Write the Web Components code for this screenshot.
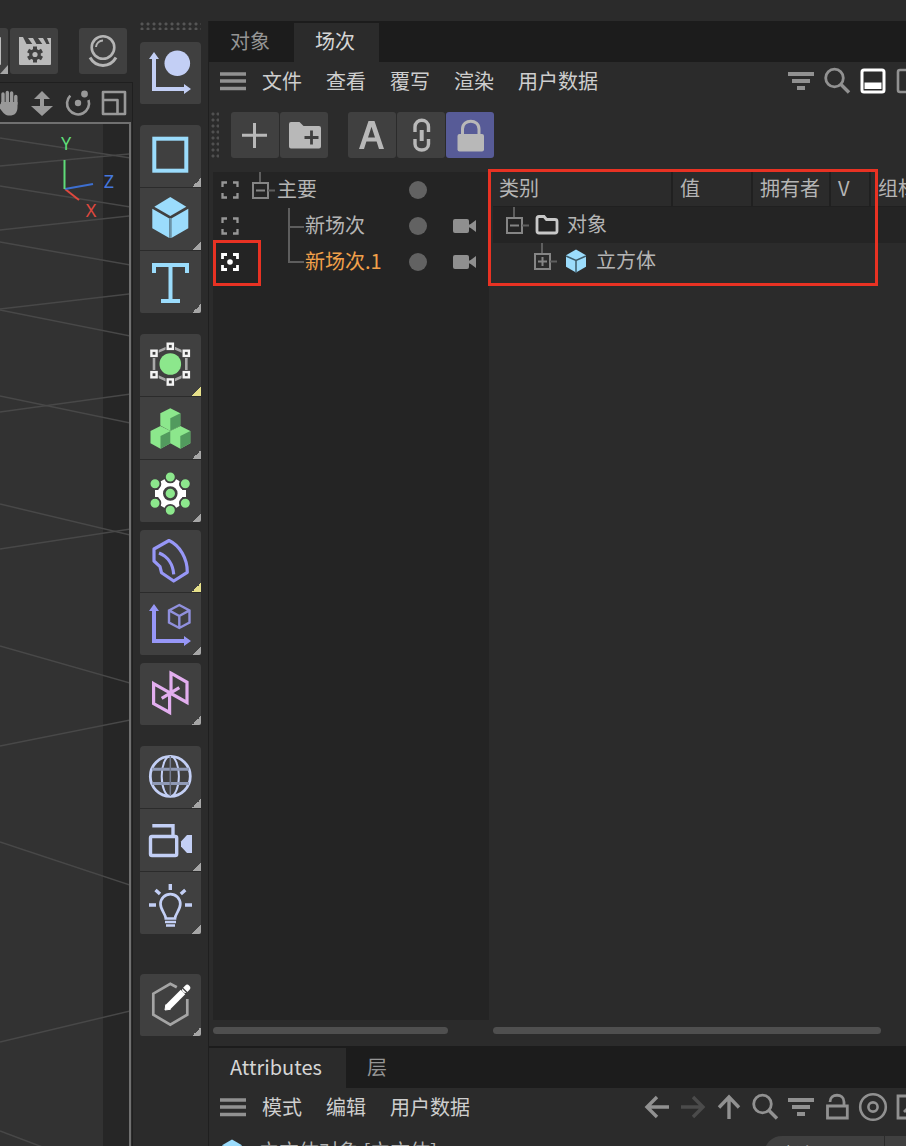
<!DOCTYPE html>
<html lang="zh-CN">
<head>
<meta charset="utf-8">
<title>场次</title>
<style>
  html, body { margin: 0; height: 100%; background: #2b2b2b; }
  body { overflow: hidden; color: #cecece; font: 20px/28px "Noto Sans CJK SC", "Noto Sans", sans-serif; }
</style>
</head>
<body>
<studio-app></studio-app>
<script>
const axes = (c, x, top, base, right) => `<g fill="${c}"><path d="M${x - 2} ${top + 5}h4V${base - 2}H${right - 6}v4H${x - 2}z"/><path d="M${x - 5} ${top + 7}l5-7 5 7zM${right - 7} ${base - 5}l7 5-7 5z"/></g>`;
const cube = (dx, dy) => `<g transform="translate(${dx} ${dy})"><path fill="#8ce78c" d="M10 0l10 5v12.300l-10 5.400-10-5.400V5z"/><path fill="#529a5e" d="M10 10l10-5v12.300l-10 5.400z"/></g>`;
const hex = [[30.3,12.3],[46.3,19.3],[46.3,40.7],[30.3,48],[14,40.7],[14,19.3]];
const dots = [[30.3,17],[45.3,23.7],[45.3,43.3],[30.3,50.3],[15,43.3],[15,23.7]];
const blueCube = `<g fill="#9bdcfc"><path d="M30.300 9l16 9.700-16 9.300-16-9.300z"/><path d="M12.300 20.800l17 9.700V50l-17-9.700zM48.300 20.800l-17 9.700V50l17-9.700z"/></g><path d="M30.300 30v20" stroke="#6a93a8" stroke-width="2"/>`;

// name: [width, height, markup]
const ICONS = {
  axisObject: [61,62, axes('#c3cff5',14,10,47,51) + '<circle cx="37.300" cy="21.300" r="12.800" fill="#c3cff5"/>'],
  rect: [61,62, '<rect x="14.300" y="13.700" width="32" height="32" fill="none" stroke="#9bdcfc" stroke-width="4"/>'],
  cube: [61,62, blueCube],
  text: [61,62, '<path fill="#9bdcfc" d="M12 12h37v10h-4v-6H32.500v32H40v4H21v-4h7.500V16H16v6h-4z"/>'],
  subdiv: [61,62, `<path d="M30.300 12.300L46.300 19.300V40.700L30.300 48 14 40.700V19.300z" fill="none" stroke="#a9a9a9" stroke-width="2.600"/><circle cx="30.300" cy="30" r="10.800" fill="#8ce78c"/>` + hex.map(([x,y]) => `<rect x="${x-4.7}" y="${y-4.7}" width="9.400" height="9.400" fill="#404040"/><rect x="${x-2.6}" y="${y-2.6}" width="5.200" height="5.200" fill="#404040" stroke="#f4f4f4" stroke-width="2.400"/>`).join('')],
  cloner: [61,62, cube(20.3,11.3) + cube(10.5,29) + cube(30.3,29)],
  mograph: [61,62, '<circle cx="30.300" cy="33.500" r="12.500" fill="#fff"/><path d="M15 33.500h31M22.600 20.200l15.400 26.600M38 20.200L22.600 46.800" stroke="#fff" stroke-width="7"/>' + dots.map(([x,y]) => `<circle cx="${x}" cy="${y}" r="5.400" fill="#8ce78c" stroke="#404040" stroke-width="1.800"/>`).join('') + '<circle cx="30.300" cy="33.500" r="6" fill="#8ce78c" stroke="#404040" stroke-width="2.600"/>'],
  bend: [61,62, '<path d="M29 10.500L14 19v12l6 5.700 1.500 6L33.700 51l13.600-8.700C47.500 29 40 15.500 29 10.500zM19 23c9 3.500 14 12 14.700 21.300" fill="none" stroke="#9797f7" stroke-width="3.200" stroke-linejoin="round"/>'],
  axisCube: [61,62, axes('#9797f7',14,11,48,51) + '<path d="M39.300 12l10.200 5.400v12.200L39.300 35 29 29.600V17.400zM29 17.400l10.300 5.600 10.200-5.600M39.300 23v12" fill="none" stroke="#9090dd" stroke-width="2.400"/>'],
  field: [61,62, '<path d="M13.600 20.600L29.600 29.700V49.500L13.600 40.600zM31 10.200L47 19.300v20.200l-16-9zM21.700 35.300l17.600-10.600" fill="none" stroke="#e2aeee" stroke-width="3.200"/>'],
  globe: [61,62, '<g fill="none" stroke="#c3cff5"><circle cx="30.300" cy="30.300" r="20" stroke-width="2.800"/><ellipse cx="30.300" cy="30.300" rx="8.600" ry="20" stroke-width="2"/><path d="M12 23.200h37M12 37.500h37" stroke="#8f99b5" stroke-width="3"/><path d="M30.300 10v40" stroke="#747b91" stroke-width="1.500"/></g>'],
  camera: [61,62, '<g fill="none" stroke="#c3cff5" stroke-width="3.400"><path d="M12.300 16.700H33V28"/><rect x="10.500" y="27.500" width="26.200" height="19" rx="1.500"/></g><path fill="#c3cff5" d="M52 26v18h-5l-6-6.500v-5L47 26z"/>'],
  bulb: [61,62, '<g fill="none" stroke="#c3cff5" stroke-width="2.700"><path d="M25.800 46.500C25.800 42 20.500 38 20.500 32a9.900 9.900 0 0 1 19.800 0c0 6-5.300 10-5.300 14.500zM25 50h11M26 53.500h9"/><path d="M30.300 12v6M15.500 18l4.500 4M45.300 18l-4.500 4M9 33h7M45 33h7" stroke-width="3.400"/></g>'],
  edit: [61,62, '<path d="M36.800 13.300L30.300 9.800 13.300 19.700v21l17 9.900 17-9.900V25" fill="none" stroke="#a5a5a5" stroke-width="2.700"/><path d="M27.800 33.200L43 18" stroke="#fff" stroke-width="6.400"/><path d="M25 36l.8-5.200 4.500 4.500z" fill="#fff" stroke="#fff"/><path d="M45.200 15.800l2-2" stroke="#fff" stroke-width="6" stroke-linecap="round"/><path d="M42 13.500l5.500 5.500" stroke="#404040" stroke-width="1.200"/>'],
  clip: [48,46, '<path fill="#bababa" d="M9 16h32v20a1 1 0 0 1-1 1H10a1 1 0 0 1-1-1z"/><path fill="#bababa" d="M9 9h4l4 8H9zM18 10h5l4 7h-4zM28 10h5l4 7h-4zM37 10h4v7h-1z"/><g fill="#404040"><circle cx="25" cy="26.500" r="5.800"/><path d="M23 18.500h4v16h-4zM17.100 24.200l2-3.500 13.900 8-2 3.500zM31 20.700l2 3.500-13.900 8-2-3.500z"/></g><circle cx="25" cy="26.500" r="2.600" fill="#bababa"/>'],
  partClip: [48,46, '<rect x="9" y="9" width="32" height="28" rx="1" fill="#bababa"/><path fill="#a6a6a6" d="M48 37v9h-8z"/>'],
  sphere: [48,46, '<g fill="none" stroke="#b5b5b5"><circle cx="24" cy="19.500" r="11.300" stroke-width="2.600"/><path d="M17 19a7 7 0 0 1 7-6.500" stroke-width="2"/><path d="M11 29.500c6 10.500 20 10.500 26 0" stroke-width="3"/></g>'],
  hand: [24,26, '<g fill="none" stroke="#999" stroke-width="3.400" stroke-linecap="round"><path d="M8 13V4M12.300 12V2.500M16.600 12V3M20.800 14V6.500M2.500 13l5 6"/></g><path fill="#999" d="M6 12h16.500v5c0 6-3 8.500-8 8.500-4 0-6-2-8.500-6z"/>'],
  updown: [26,26, '<path fill="#999" d="M13 1l8 8h-6v7h9l-11 10L2 16h9V9H5z"/>'],
  orbit: [26,26, '<path d="M5.300 5.600A11 11 0 1 0 23.500 10" fill="none" stroke="#999" stroke-width="2.600"/><circle cx="13" cy="13" r="3.200" fill="#999"/><circle cx="19.500" cy="4" r="3.400" fill="#999"/>'],
  layout: [26,26, '<path d="M2 2h22v22H2zM2 10h14.500v14" fill="none" stroke="#999" stroke-width="2.600" stroke-linejoin="round"/>'],
  menu: [26,26, '<path d="M0 6h26M0 13h26M0 20.500h26" stroke="#919191" stroke-width="3.600"/>'],
  filter: [26,26, '<path d="M0 6h26M4 13h18M9 20h8" stroke="#919191" stroke-width="3.800"/>'],
  search: [26,26, '<circle cx="10.500" cy="10" r="8.800" fill="none" stroke="#919191" stroke-width="2.800"/><path d="M17 16.500l8 8" stroke="#919191" stroke-width="3.400"/>'],
  split: [26,26, '<rect x="2" y="2" width="22" height="22" rx="2" fill="none" stroke="#fff" stroke-width="3"/><path d="M4.500 14.500h17V21h-17z" fill="#fff"/>'],
  pane: [26,26, '<rect x="2" y="2" width="22" height="22" rx="2" fill="none" stroke="#919191" stroke-width="2.600"/>'],
  external: [26,26, '<path d="M24 14v10H2V2h11M8 18L22 4" fill="none" stroke="#919191" stroke-width="2.800"/>'],
  left: [26,26, '<path d="M25 13H3M13 3L3 13l10 10" fill="none" stroke="#919191" stroke-width="3.400"/>'],
  right: [26,26, '<path d="M1 13h22M13 3l10 10-10 10" fill="none" stroke="#4b4b4b" stroke-width="3.400"/>'],
  up: [26,26, '<path d="M13 25V3M3 13.500L13 3l10 10.500" fill="none" stroke="#919191" stroke-width="3.400"/>'],
  unlock: [26,26, '<path d="M3.500 12h19.800v12H3.500zM6 8c0-9 14-9 14 0v4" fill="none" stroke="#919191" stroke-width="2.800"/>'],
  target: [26,26, '<g fill="none" stroke="#919191" stroke-width="2.600"><circle cx="13" cy="13" r="12.800"/><circle cx="13" cy="13" r="4.600"/></g>'],
  plus: [48,46, '<path d="M11 23.300h25M23.500 11v25" stroke="#b8b8b8" stroke-width="3"/>'],
  addFolder: [48,46, '<path fill="#b8b8b8" d="M9 12a2 2 0 0 1 2-2h8.500l4 4H39a2 2 0 0 1 2 2v18.500a2 2 0 0 1-2 2H11a2 2 0 0 1-2-2z"/><path d="M24.500 25.500h14M31.500 18.500v14" stroke="#404040" stroke-width="2.800"/>'],
  auto: [48,46, '<path fill="#b8b8b8" fill-rule="evenodd" d="M20.500 9h6L36 37h-5l-2.400-7.500H18.400L16 37h-5zM20 25.500h7l-3.500-10.700z"/>'],
  link: [48,46, '<path d="M18 20v-5c0-9 13.500-9 13.500 0v5M18 27v5c0 8 13.500 8 13.500 0v-5" fill="none" stroke="#b8b8b8" stroke-width="3.400"/><path d="M24.700 18v11" stroke="#b8b8b8" stroke-width="4"/>'],
  lock: [48,46, '<path fill="#b8b8b8" d="M11.500 24a2 2 0 0 1 2-2H36a2 2 0 0 1 2 2v13.500a2 2 0 0 1-2 2H13.500a2 2 0 0 1-2-2z"/><path d="M16.500 23v-6c0-10.500 16.500-10.500 16.500 0v6" fill="none" stroke="#b8b8b8" stroke-width="3"/>'],
  focus: [18,18, '<path d="M1.500 6V1.500H6M12 1.500h4.500V6M16.500 12v4.500H12M6 16.500H1.500V12" fill="none" stroke="#969696" stroke-width="2.300"/>'],
  focusOn: [18,18, '<path d="M1.500 6V1.500H6M12 1.500h4.500V6M16.500 12v4.500H12M6 16.500H1.500V12" fill="none" stroke="#fff" stroke-width="2.800"/><circle cx="9" cy="9" r="2.800" fill="#fff"/>'],
  movie: [24,14, '<rect x="0" y="0" width="16" height="14" rx="2" fill="#8f8f8f"/><path d="M17 5.500L23 1v12l-6-4.500z" fill="#8f8f8f"/><path d="M15 5.500h3v3h-3z" fill="#8f8f8f"/>'],
  folder: [24,20, '<path d="M2 5V3.500C2 2 2.500 1.500 4 1.500h5l2.500 3H20c1.500 0 2 .5 2 2V16c0 1.500-.5 2-2 2H4c-1.500 0-2-.5-2-2z" fill="none" stroke="#c8c8c8" stroke-width="2.800"/>'],
  smallCube: [22,24, '<path d="M11 .5l10 5.800v11.400L11 23.500l-10-5.800V6.300z" fill="#9bdcfc"/><path d="M1 7l10 4.500L21 7M11 11.500v12" fill="none" stroke="#3c5b69" stroke-width="1.500"/>'],
  // tree guides, one cell of a 36px row each
  rootNode: [29,36, '<g fill="none" stroke="#858585" stroke-width="2"><path d="M12 0v11" stroke="#5e5e5e"/><rect x="5" y="11" width="15" height="15"/><path d="M8 18.500h9"/><path d="M20 18.500h7" stroke="#5e5e5e"/></g>'],
  closedNode: [29,36, '<g fill="none" stroke="#858585" stroke-width="2"><path d="M12 0v11" stroke="#5e5e5e"/><rect x="5" y="11" width="15" height="15"/><path d="M8 18.500h9M12.500 14v9"/><path d="M20 18.500h7" stroke="#5e5e5e"/></g>'],
  branch: [57,36, '<path d="M41 0v36M41 19h15" fill="none" stroke="#5e5e5e" stroke-width="2"/>'],
  lastBranch: [57,36, '<path d="M41 0v18h15" fill="none" stroke="#5e5e5e" stroke-width="2"/>']
};

const define = (name, css, html) => customElements.define(name, class extends HTMLElement {
  constructor() {
    super();
    this.attachShadow({ mode: 'open' }).innerHTML = `<style>*,::before,::after,:host::after{box-sizing:border-box}${css}</style>${typeof html === 'function' ? html(this) : html}`;
  }
});

define('studio-icon', `:host{display:block;flex:none} svg{display:block;overflow:visible}`, el => {
  const [w, h, body] = ICONS[el.getAttribute('name')];
  return `<svg width="${w}" height="${h}" viewBox="0 0 ${w} ${h}" aria-hidden="true">${body}</svg>`;
});

// flat icon button: bare in menu bars, filled in toolbars
define('icon-button', `
  :host{display:block;flex:none}
  button{display:grid;place-items:center;padding:0;margin:0;border:0;background:none;color:inherit;font:inherit}
  :host([filled]) button{width:48px;height:46px;background:#404040;border-radius:3px}
  :host([active]) button{background:#575b97}`,
  el => `<button type="button" aria-label="${el.getAttribute('label')}"><studio-icon name="${el.getAttribute('icon')}"></studio-icon></button>`);

define('palette-button', `
  :host{display:block}
  button{position:relative;display:block;width:100%;height:62px;padding:0;border:0;background:#404040}
  button.more::after{content:"";position:absolute;right:0;bottom:0;width:9px;height:9px;background:linear-gradient(135deg,transparent 50%,var(--mark,#a6a6a6) 50%)}
  `, el => `<button type="button" class="${el.hasAttribute('more') ? 'more' : ''}" aria-label="${el.getAttribute('label')}"><studio-icon name="${el.getAttribute('icon')}"></studio-icon></button>`);

define('palette-group', `:host{display:flex;flex-direction:column;gap:1px;border-radius:4px 4px 2px 2px;overflow:hidden;flex:none}`, `<slot></slot>`);

const P = (icon, label, more = 'more') => `<palette-button icon="${icon}" label="${label}" ${more}></palette-button>`;
define('tool-palette', `
  :host{display:flex;flex-direction:column;gap:21px;padding:22px 7px 0;background:#2b2b2b;overflow:hidden}
  .grip{height:8px;margin-bottom:-9px;background:radial-gradient(circle at 2px 2px,#555 1px,transparent 2px) 0 0/6px 5px}
  .near{margin-top:-13px} .far{margin-top:19px}
  .hot{--mark:#e6e08a}`, `
  <div class="grip"></div>
  <palette-group>${P('axisObject', '轴心', '')}</palette-group>
  <palette-group>${P('rect','矩形')}${P('cube','立方体')}${P('text','文本')}</palette-group>
  <palette-group><palette-button class="hot" icon="subdiv" label="细分曲面" more></palette-button>${P('cloner','克隆')}${P('mograph','运动图形')}</palette-group>
  <palette-group class="near"><palette-button class="hot" icon="bend" label="弯曲" more></palette-button>${P('axisCube','对象轴')}</palette-group>
  <palette-group class="near">${P('field','域')}</palette-group>
  <palette-group>${P('globe','天空')}${P('camera','摄像机')}${P('bulb','灯光')}</palette-group>
  <palette-group class="far">${P('edit','编辑')}</palette-group>`);

const LINES = [[138,158],[166,154],[186,207],[230,216],[242,265],[309,294],[310,336],[396,423],[412,394],[504,535],[549,529],[646,683],[746,720],[842,885],[1042,1011],[1131,1180]];
define('view-port', `
  :host{display:flex;flex-direction:column;min-width:0;overflow:hidden}
  .commands{display:flex;height:82px;padding-top:28px;gap:2px;flex:none}
  .commands :first-child{margin-left:-40px}
  .commands :last-child{margin-left:19px}
  .pane{display:flex;flex-direction:column;flex:1;min-height:0;border:solid #1f1f1f;border-width:1px 1px 0 0;padding-right:1px}
  .head{display:flex;align-items:center;justify-content:space-between;height:39px;flex:none;padding-right:4px;margin-left:-5px}
  .view{flex:1;min-height:0;border:solid #707070;border-width:2px 2px 0 0;background:linear-gradient(to left,#262626 26px,#323232 26px);overflow:hidden}
  svg{display:block}
  text{font:18px "Noto Sans",sans-serif;text-anchor:middle}`, `
  <div class="commands">
    <icon-button filled icon="partClip" label="渲染"></icon-button>
    <icon-button filled icon="clip" label="渲染设置"></icon-button>
    <icon-button filled icon="sphere" label="材质"></icon-button>
  </div>
  <div class="pane">
  <div class="head">
    <icon-button icon="hand" label="平移"></icon-button><icon-button icon="updown" label="推拉"></icon-button>
    <icon-button icon="orbit" label="旋转"></icon-button><icon-button icon="layout" label="视图"></icon-button>
  </div>
  <div class="view"><svg width="130" height="1040" viewBox="0 124 130 1040">
    <g stroke="#484848" stroke-width="1.500">${LINES.map(([a,b]) => `<path d="M0 ${a}L130 ${b}"/>`).join('')}</g>
    <path d="M65 189l14 11" stroke="#e0483e" stroke-width="2"/><path d="M65 189l28-5" stroke="#3d6fd0" stroke-width="2"/><path d="M64.500 160v29" stroke="#5fdc78" stroke-width="2"/>
    <text x="66" y="150" fill="#5fdc78">Y</text><text x="109" y="188" fill="#4577dd">Z</text><text x="91" y="217" fill="#e0483e">X</text>
  </svg></div></div>`);

define('tab-bar', `:host{display:flex;align-items:stretch;height:41px;padding-top:2px;background:#1c1c1c;flex:none}`, `<slot></slot>`);
define('tab-item', `:host{display:block}
  button{height:100%;padding:0 24px 3px 21px;border:0;background:none;color:#959595;font:inherit;white-space:nowrap}
  :host([selected]) button{background:#2b2b2b;color:#d6d6d6}`,
  el => `<button type="button" role="tab" aria-selected="${el.hasAttribute('selected')}"><slot></slot></button>`);

define('menu-bar', `:host{display:flex;align-items:center;height:38px;flex:none;padding-left:11px;overflow:hidden}
  nav{display:flex;gap:24px;margin:0 auto 0 16px}
  ::slotted(button){border:0;padding:0 0 1px;background:none;color:inherit;font:inherit;white-space:nowrap}
  .tools{display:flex;align-items:center;gap:10px;margin-right:-16px}`,
  `<icon-button icon="menu" label="菜单"></icon-button><nav><slot></slot></nav><div class="tools"><slot name="tools"></slot></div>`);

define('take-row', `
  :host{position:relative;display:grid;grid-template-columns:35px auto 1fr 18px 24px;align-items:center;height:36px;padding-right:12px;color:#b5b5b5}
  .name{line-height:28px;padding-bottom:2px;white-space:nowrap}
  .focus{padding-left:8px}
  i{width:18px;height:18px;border-radius:50%;background:#626262}
  studio-icon.cam{margin-left:26px}
  :host([current]) .name{color:#f2a04a}
  :host([current])::after{content:"";position:absolute;left:0;top:-4px;width:48px;height:46px;border:3px solid #e83223}`,
  el => `<icon-button class="focus" icon="${el.hasAttribute('current') ? 'focusOn' : 'focus'}" label="激活场次"></icon-button>
    <studio-icon name="${el.getAttribute('guide')}"></studio-icon><span class="name"><slot></slot></span><i></i>${el.hasAttribute('camera') ? '<studio-icon class="cam" name="movie"></studio-icon>' : ''}`);

define('take-tree', `:host{display:block;background:#242424}
  take-row{padding-right:38px}`, `
  <take-row guide="rootNode">主要</take-row>
  <take-row guide="branch" camera>新场次</take-row>
  <take-row guide="lastBranch" camera current>新场次.1</take-row>`);

define('override-list', `
  :host{position:relative;display:block;min-width:0;color:#b5b5b5}
  .clip{overflow:hidden}
  table{width:460px;border-collapse:collapse;table-layout:fixed}
  th{height:34px;padding:0 0 1px 7px;text-align:left;font-weight:400;border-right:2px solid #202020;border-bottom:1px solid #202020;white-space:nowrap}
  th:first-child{padding-left:6px}
  td{height:36px;padding:0}
  .group{background:#242424}
  .cell{display:flex;align-items:center;height:36px;padding-left:9px}
  .cell span{padding-bottom:2px}
  .group span{margin-left:8px}
  .child{padding-left:37px}
  .child span{margin-left:9px}
  .group studio-icon:nth-child(2){margin-left:4px}
  .child studio-icon:nth-child(2){margin-left:6px}
  .mark{position:absolute;left:-5px;top:-3px;width:390px;height:117px;border:3px solid #e83223}`, `
  <div class="clip"><table>
    <colgroup><col style="width:179px"><col style="width:80px"><col style="width:78px"><col style="width:40px"><col></colgroup>
    <thead><tr><th>类别</th><th>值</th><th>拥有者</th><th>V</th><th>组标签</th></tr></thead>
    <tbody>
      <tr class="group"><td colspan="5"><div class="cell"><studio-icon name="rootNode"></studio-icon><studio-icon name="folder"></studio-icon><span>对象</span></div></td></tr>
      <tr><td colspan="5"><div class="cell child"><studio-icon name="closedNode"></studio-icon><studio-icon name="smallCube"></studio-icon><span>立方体</span></div></td></tr>
    </tbody>
  </table></div>
  <div class="mark"></div>`);

define('take-manager', `
  :host{display:flex;flex-direction:column;flex:1;min-height:0}
  .bar{display:flex;height:72px;padding:12px 0 14px 2px;flex:none}
  .grip{width:8px;margin-right:12px;background:radial-gradient(circle at 2px 2px,#505050 1px,transparent 2px) 0 0/5px 6px}
  .set{display:flex;gap:1px;margin-right:20px}
  .lists{flex:1;min-height:0;display:grid;grid-template-columns:276px minmax(0,1fr);column-gap:4px;padding-left:4px}
  .scroll{display:grid;grid-template-columns:276px minmax(0,1fr);column-gap:4px;height:26px;padding:7px 25px 0 4px;flex:none}
  .scroll div{height:7px;border-radius:4px;background:#4f4f4f}
  .scroll :first-child{margin-right:41px}`, `
  <tab-bar><tab-item>对象</tab-item><tab-item selected>场次</tab-item></tab-bar>
  <menu-bar><button>文件</button><button>查看</button><button>覆写</button><button>渲染</button><button>用户数据</button>
    <icon-button slot="tools" icon="filter" label="过滤"></icon-button><icon-button slot="tools" icon="search" label="搜索"></icon-button><icon-button slot="tools" icon="split" label="分栏"></icon-button><icon-button slot="tools" icon="pane" label="面板"></icon-button>
  </menu-bar>
  <div class="bar"><div class="grip"></div>
    <div class="set"><icon-button filled icon="plus" label="新建场次"></icon-button><icon-button filled icon="addFolder" label="新建组"></icon-button></div>
    <div class="set"><icon-button filled icon="auto" label="自动"></icon-button><icon-button filled icon="link" label="链接"></icon-button><icon-button filled active icon="lock" label="锁定"></icon-button></div>
  </div>
  <div class="lists"><take-tree></take-tree><override-list></override-list></div>
  <div class="scroll"><div></div><div></div></div>`);

define('attribute-manager', `
  :host{display:block;flex:0 0 100px;overflow:hidden}
  tab-bar{height:42px}
  .title{display:flex;align-items:flex-start;padding:13px 0 0 12px;color:#b5b5b5;white-space:nowrap}
  .title span{margin:-2px auto 0 16px}
  .title button{height:36px;margin-top:-3px;border:0;padding:2px 10px 0;background:#404040;color:#cecece;font:inherit;text-align:left;width:120px;border-radius:18px 0 0 0}
  .title button + button{width:21px;margin-left:1px;border-radius:0}`, `
  <tab-bar><tab-item selected>Attributes</tab-item><tab-item>层</tab-item></tab-bar>
  <menu-bar><button>模式</button><button>编辑</button><button>用户数据</button>
    <icon-button slot="tools" icon="left" label="后退"></icon-button><icon-button slot="tools" icon="right" label="前进"></icon-button><icon-button slot="tools" icon="up" label="向上"></icon-button><icon-button slot="tools" icon="search" label="搜索"></icon-button><icon-button slot="tools" icon="filter" label="过滤"></icon-button><icon-button slot="tools" icon="unlock" label="锁定"></icon-button><icon-button slot="tools" icon="target" label="目标"></icon-button><icon-button slot="tools" icon="external" label="新窗口"></icon-button>
  </menu-bar>
  <div class="title"><studio-icon name="smallCube"></studio-icon><span>立方体对象 [立方体]</span><button type="button">默认</button><button type="button" aria-label="更多"></button></div>`);

define('studio-app', `
  :host{display:grid;grid-template-columns:133px 75px minmax(0,1fr);height:100vh;overflow:hidden;background:#2b2b2b}
  main{display:flex;flex-direction:column;min-height:0;padding-top:21px;overflow:hidden}
  main > *{border-left:1px solid #1f1f1f}`, `
  <view-port></view-port><tool-palette></tool-palette>
  <main><take-manager></take-manager><attribute-manager></attribute-manager></main>`);
</script>
</body>
</html>
